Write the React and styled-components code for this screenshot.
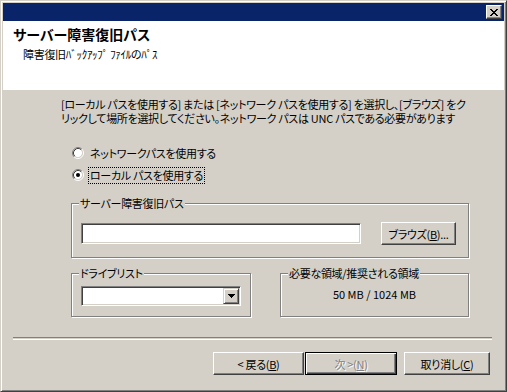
import React from 'react';
import styled, { createGlobalStyle } from 'styled-components';

const GlobalStyle = createGlobalStyle`
  html, body { margin: 0; padding: 0; background: #d4d0c8; }
  body {
    font-family: "Noto Sans CJK JP", "Noto Sans", sans-serif;
    font-size: 11px;
    letter-spacing: -0.3px;
    color: #000;
    font-feature-settings: "palt";
  }
`;

const Window = styled.div`
  width: 507px;
  height: 392px;
  box-sizing: border-box;
  background: #d4d0c8;
  border: 1px solid;
  border-color: #d4d0c8 #404040 #404040 #d4d0c8;
  box-shadow: inset 1px 1px 0 #fff, inset -1px -1px 0 #808080;
  padding: 2px;
  display: flex;
  flex-direction: column;
`;

const TitleBar = styled.div`
  height: 18px;
  flex: none;
  background: #0a246a;
  display: flex;
  align-items: center;
  justify-content: flex-end;
  padding-right: 2px;
`;

const CloseButton = styled.div`
  width: 16px;
  height: 14px;
  box-sizing: border-box;
  background: #d4d0c8;
  border: 1px solid;
  border-color: #fff #404040 #404040 #fff;
  box-shadow: inset -1px -1px 0 #808080;
  display: flex;
  align-items: center;
  justify-content: center;
  padding-right: 1px;
`;

const Header = styled.div`
  height: 69px;
  flex: none;
  background: #fff;
  padding: 5px 0 0 10px;
  box-sizing: border-box;
`;

const Title = styled.div`
  font-size: 14px;
  font-weight: bold;
  line-height: 17px;
  letter-spacing: 0;
`;

const Subtitle = styled.div`
  margin: 4px 0 0 10px;
  line-height: 14px;
`;

const Body = styled.div`
  flex: 1;
  display: flex;
  flex-direction: column;
`;

const Description = styled.p`
  margin: 7px 0 0 58px;
  line-height: 14px;
  white-space: nowrap;
`;

const RadioList = styled.div`
  margin: 19px 0 0 69px;
  display: flex;
  flex-direction: column;
  gap: 4px;
`;

const RadioRow = styled.label`
  height: 18px;
  display: flex;
  align-items: center;
  gap: 4px;
`;

const RadioLabel = styled.span`
  padding: 0 1px;
  line-height: 15px;
  border: 1px dotted ${p => (p.$focus ? '#000' : 'transparent')};
`;

const Groups = styled.div`
  margin: 13px 0 0 68px;
  display: flex;
  flex-direction: column;
  gap: 9px;
`;

const GroupRow = styled.div`
  display: flex;
  gap: 29px;
`;

const Group = styled.fieldset`
  box-sizing: border-box;
  margin: 0;
  min-width: 0;
  width: ${p => p.$w}px;
  height: ${p => p.$h}px;
  border: 1px solid #808080;
  box-shadow: inset 1px 1px 0 #fff, 1px 1px 0 #fff;
  padding: 0;
`;

const Legend = styled.legend`
  margin-left: 7px;
  padding: 0 1px;
  height: 13px;
  line-height: 13px;
  background: #d4d0c8;
`;

const GroupBody = styled.div`
  padding: ${p => p.$pad};
  display: flex;
  align-items: center;
  justify-content: ${p => (p.$center ? 'center' : 'flex-start')};
  gap: 20px;
`;

const TextField = styled.div`
  width: ${p => p.$w}px;
  height: ${p => p.$h}px;
  box-sizing: border-box;
  background: #fff;
  border: 1px solid;
  border-color: #808080 #fff #fff #808080;
  box-shadow: inset 1px 1px 0 #404040, inset -1px -1px 0 #d4d0c8;
  display: flex;
  justify-content: flex-end;
  padding: 1px;
`;

const DropButton = styled.div`
  width: 16px;
  height: 16px;
  box-sizing: border-box;
  background: #d4d0c8;
  border: 1px solid;
  border-color: #d4d0c8 #404040 #404040 #d4d0c8;
  box-shadow: inset 1px 1px 0 #fff, inset -1px -1px 0 #808080;
  display: flex;
  align-items: center;
  justify-content: center;
`;

const Button = styled.button`
  width: ${p => p.$w}px;
  height: 23px;
  box-sizing: border-box;
  margin: 0;
  padding: 0;
  font: inherit;
  letter-spacing: inherit;
  line-height: 14px;
  background: #d4d0c8;
  color: ${p => (p.$disabled ? '#808080' : '#000')};
  text-shadow: ${p => (p.$disabled ? '1px 1px 0 #fff' : 'none')};
  border: 1px solid;
  border-color: ${p => (p.$default ? '#000' : '#fff #404040 #404040 #fff')};
  box-shadow: ${p =>
    p.$default
      ? 'inset 1px 1px 0 #fff, inset -1px -1px 0 #404040, inset -2px -2px 0 #808080'
      : 'inset -1px -1px 0 #808080, inset 1px 1px 0 #d4d0c8'};
`;

const Mnemonic = styled.span`
  text-decoration: underline;
`;

const Value = styled.div`
  line-height: 14px;
  letter-spacing: 0;
`;

const Footer = styled.div`
  margin-top: auto;
  padding: 0 14px 14px 0;
  display: flex;
  flex-direction: column;
`;

const Separator = styled.div`
  height: 1px;
  margin: 0 -2px 12px 10px;
  border-top: 1px solid #808080;
  border-bottom: 1px solid #fff;
`;

const ButtonRow = styled.div`
  display: flex;
  justify-content: flex-end;
`;

const Spacer = styled.div`
  width: ${p => p.$w}px;
`;

const CloseGlyph = () => (
  <svg width="8" height="7" viewBox="0 0 8 7" shapeRendering="crispEdges">
    <path
      fill="#000"
      d="M0 0h2v1H0zM6 0h2v1H6zM1 1h2v1H1zM5 1h2v1H5zM2 2h4v1H2zM3 3h2v1H3zM2 4h4v1H2zM1 5h2v1H1zM5 5h2v1H5zM0 6h2v1H0zM6 6h2v1H6z"
    />
  </svg>
);

const DownArrow = () => (
  <svg width="7" height="4" viewBox="0 0 7 4" shapeRendering="crispEdges">
    <path fill="#000" d="M0 0h7v1H0zM1 1h5v1H1zM2 2h3v1H2zM3 3h1v1H3z" />
  </svg>
);

const RadioIcon = ({ checked }) => (
  <svg width="12" height="12" viewBox="0 0 12 12">
    <circle cx="6" cy="6" r="4.2" fill="#fff" />
    <path d="M2.11 9.89 A5.5 5.5 0 0 1 9.89 2.11" fill="none" stroke="#808080" strokeWidth="1" />
    <path d="M9.89 2.11 A5.5 5.5 0 0 1 2.11 9.89" fill="none" stroke="#fff" strokeWidth="1" />
    <path d="M2.82 9.18 A4.5 4.5 0 0 1 9.18 2.82" fill="none" stroke="#404040" strokeWidth="1" />
    <path d="M9.18 2.82 A4.5 4.5 0 0 1 2.82 9.18" fill="none" stroke="#d4d0c8" strokeWidth="1" />
    {checked && <circle cx="6" cy="6" r="2" fill="#000" />}
  </svg>
);

export default function App() {
  return (
    <>
      <GlobalStyle />
      <Window>
        <TitleBar>
          <CloseButton>
            <CloseGlyph />
          </CloseButton>
        </TitleBar>
        <Header>
          <Title>サーバー障害復旧パス</Title>
          <Subtitle>障害復旧ﾊﾞｯｸｱｯﾌﾟ ﾌｧｲﾙのﾊﾟｽ</Subtitle>
        </Header>
        <Body>
          <Description>
            [ローカル パスを使用する] または [ネットワーク パスを使用する] を選択し、[ブラウズ] をク
            <br />
            リックして場所を選択してください。ネットワーク パスは UNC パスである必要があります
          </Description>
          <RadioList>
            <RadioRow>
              <RadioIcon />
              <RadioLabel>ネットワークパスを使用する</RadioLabel>
            </RadioRow>
            <RadioRow>
              <RadioIcon checked />
              <RadioLabel $focus>ローカル パスを使用する</RadioLabel>
            </RadioRow>
          </RadioList>
          <Groups>
            <Group $w={398} $h={61}>
              <Legend>サーバー障害復旧パス</Legend>
              <GroupBody $pad="12px 0 0 9px">
                <TextField $w={280} $h={21} />
                <Button $w={75}>
                  ブラウズ(<Mnemonic>B</Mnemonic>)...
                </Button>
              </GroupBody>
            </Group>
            <GroupRow>
              <Group $w={180} $h={50}>
                <Legend>ドライブリスト</Legend>
                <GroupBody $pad="6px 0 0 9px">
                  <TextField $w={160} $h={20}>
                    <DropButton>
                      <DownArrow />
                    </DropButton>
                  </TextField>
                </GroupBody>
              </Group>
              <Group $w={189} $h={50}>
                <Legend>必要な領域/推奨される領域</Legend>
                <GroupBody $pad="7px 0 0 0" $center>
                  <Value>50 MB / 1024 MB</Value>
                </GroupBody>
              </Group>
            </GroupRow>
          </Groups>
          <Footer>
            <Separator />
            <ButtonRow>
              <Button $w={91}>
                &lt; 戻る(<Mnemonic>B</Mnemonic>)
              </Button>
              <Spacer $w={1} />
              <Button $w={92} $default $disabled>
                次 &gt;(<Mnemonic>N</Mnemonic>)
              </Button>
              <Spacer $w={7} />
              <Button $w={86}>
                取り消し(<Mnemonic>C</Mnemonic>)
              </Button>
            </ButtonRow>
          </Footer>
        </Body>
      </Window>
    </>
  );
}
